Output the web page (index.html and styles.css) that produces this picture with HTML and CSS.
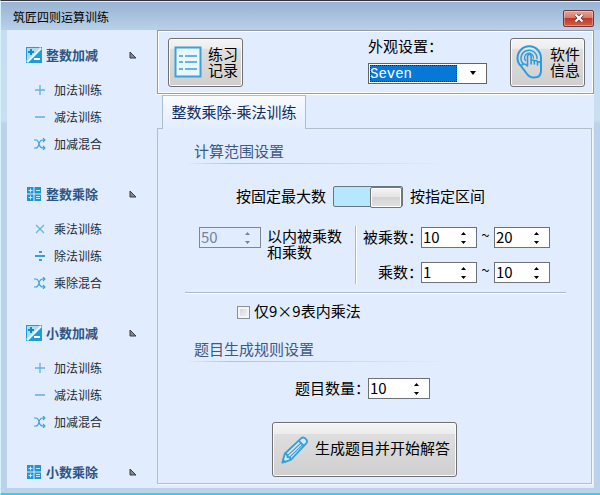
FILE: index.html
```
<!DOCTYPE html>
<html lang="zh-CN">
<head>
<meta charset="utf-8">
<meta name="viewport" content="width=device-width, initial-scale=1">
<title>筑匠四则运算训练</title>
<link rel="stylesheet" href="styles.css">
</head>
<body>
<svg class="symbols" aria-hidden="true">
  <symbol id="plusminus" viewBox="0 0 16 16">
    <path d="M0 0h16v16H0z" fill="#1f9ddb"/><path d="M15 1L1 15" stroke="#e8f6fe" stroke-width="2.500"/><path d="M1 1h13L1 14z" fill="#a9dcf5"/>
    <path d="M2 5h6M5 2v6" stroke="#1787c8" stroke-width="2"/><path d="M8 12h6" stroke="#fff" stroke-width="2"/>
  </symbol>
  <symbol id="calc" viewBox="0 0 16 16">
    <path d="M1 1h6.500v6.500H1zM8.500 1H15v6.500H8.500zM1 8.500h6.500V15H1zM8.500 8.500H15V15H8.500z" fill="#1f93d6"/>
    <path d="M2.500 4.500h4M4.500 2.500v4M10 4.500h4M2.500 11.500h4M4.500 9.500v4M10 10.500h4M10 12.500h4" stroke="#c5e9fc"/>
  </symbol>
  <symbol id="plus" viewBox="0 0 12 12"><path d="M1 6h10M6 1v10" stroke="#65b4e4" stroke-width="1.4"/></symbol>
  <symbol id="minus" viewBox="0 0 12 12"><path d="M1 6h10" stroke="#55ade1" stroke-width="1.4"/></symbol>
  <symbol id="times" viewBox="0 0 12 12"><path d="M2 2l8 8M10 2l-8 8" stroke="#65b4e4" stroke-width="1.2"/></symbol>
  <symbol id="divide" viewBox="0 0 12 12"><path d="M1 6h10" stroke="#369fdb" stroke-width="2"/><path d="M5 1h3v2H5zM5 9h3v2H5z" fill="#369fdb"/></symbol>
  <symbol id="mix" viewBox="0 0 12 12"><path d="M0 2h2q2 0 3 4t4 4h2M0 10h2q2 0 3-4t4-4h2M9 0l2 2-2 2M9 8l2 2-2 2" fill="none" stroke="#3ba2dc" stroke-width="1.1"/></symbol>
  <symbol id="corner" viewBox="0 0 8 8"><path d="M1 1v6h6z" fill="#888" stroke="#353b45"/></symbol>
  <symbol id="updown" viewBox="0 0 5 12"><path d="M0 3L2.500 0 5 3zM0 9h5L2.500 12z" fill="currentColor"/></symbol>
</svg>

<header class="titlebar">
  <h1>筑匠四则运算训练</h1>
  <button class="close" type="button" aria-label="关闭"><svg viewBox="0 0 10 8"><path d="M1.500 .5l7 7M8.500 .5l-7 7" stroke="#5a3034" stroke-width="3.600"/><path d="M1.500 .5l7 7M8.500 .5l-7 7" stroke="#fff" stroke-width="2.200"/></svg></button>
</header>

<div class="window">
  <nav class="sidebar">
    <section class="group">
      <h2><svg class="group-icon"><use href="#plusminus"/></svg>整数加减<svg class="fold"><use href="#corner"/></svg></h2>
      <ul>
        <li><a href="#"><svg><use href="#plus"/></svg>加法训练</a></li>
        <li><a href="#"><svg><use href="#minus"/></svg>减法训练</a></li>
        <li><a href="#"><svg><use href="#mix"/></svg>加减混合</a></li>
      </ul>
    </section>
    <section class="group">
      <h2><svg class="group-icon"><use href="#calc"/></svg>整数乘除<svg class="fold"><use href="#corner"/></svg></h2>
      <ul>
        <li><a href="#"><svg><use href="#times"/></svg>乘法训练</a></li>
        <li><a href="#"><svg><use href="#divide"/></svg>除法训练</a></li>
        <li><a href="#"><svg><use href="#mix"/></svg>乘除混合</a></li>
      </ul>
    </section>
    <section class="group">
      <h2><svg class="group-icon"><use href="#plusminus"/></svg>小数加减<svg class="fold"><use href="#corner"/></svg></h2>
      <ul>
        <li><a href="#"><svg><use href="#plus"/></svg>加法训练</a></li>
        <li><a href="#"><svg><use href="#minus"/></svg>减法训练</a></li>
        <li><a href="#"><svg><use href="#mix"/></svg>加减混合</a></li>
      </ul>
    </section>
    <section class="group">
      <h2><svg class="group-icon"><use href="#calc"/></svg>小数乘除<svg class="fold"><use href="#corner"/></svg></h2>
    </section>
  </nav>

  <main class="content">
    <div class="toolbar">
      <button class="button tool" type="button">
        <svg class="list-icon" viewBox="0 0 28 32"><path d="M1.500 1.500h25v29h-25z" fill="#eaf5fc" stroke="#3ba3dc" stroke-width="2"/><path d="M5 10h4M11 10h12M5 16h4M11 16h12M5 23h4M11 23h12" stroke="#3aa0da" stroke-width="1.500"/></svg>
        <span>练习<br>记录</span>
      </button>
      <div class="theme">
        <label for="theme">外观设置：</label>
        <div class="combo">
          <select id="theme"><option>Seven</option></select>
          <svg viewBox="0 0 6 4"><path d="M0 0h6L3 4z"/></svg>
        </div>
      </div>
      <button class="button tool" type="button">
        <svg class="touch-icon" viewBox="0 0 28 34"><g fill="none" stroke="#2c9bdc" stroke-linecap="round" stroke-linejoin="round"><path d="M25 19V13A11.700 11.700 0 0 0 1.500 13Q1.500 18 5 21L11 29Q13.500 32.500 18 32.500 25 32.500 25 26V18" stroke-width="2"/><path d="M7 18.500A8 8 0 1 1 21 13.500" stroke-width="1.500"/><path d="M9.500 15.500A4.500 4.500 0 1 1 17.500 13" stroke-width="1.300"/><path d="M11.500 21V11.500q0-2 1.800-2t1.800 2V19v-3q1.500-2 3.200 0v3-2.500q1.500-2 3.200 0V20v-2.500q1.500-1.500 3.500 .5M11.500 21q-3.500-3.500-5.500-1" stroke-width="1.600"/></g></svg>
        <span>软件<br>信息</span>
      </button>
    </div>

    <div class="tabs" role="tablist"><button class="tab" type="button" role="tab" aria-selected="true">整数乘除-乘法训练</button></div>

    <form class="panel">
      <div class="form">
        <h3>计算范围设置</h3>
        <div class="mode">
          <label for="mode">按固定最大数</label>
          <input class="toggle" type="checkbox" role="switch" id="mode" checked>
          <label for="mode">按指定区间</label>
        </div>
        <div class="ranges">
          <div class="limit">
            <div class="spin wide disabled"><input id="limit" type="text" inputmode="numeric" value="50" disabled><svg><use href="#updown"/></svg></div>
            <label for="limit">以内被乘数<br>和乘数</label>
          </div>
          <div class="intervals">
            <label for="a1">被乘数：</label>
            <div class="spin"><input id="a1" type="text" inputmode="numeric" value="10"><svg><use href="#updown"/></svg></div>
            <span class="tilde">~</span>
            <div class="spin"><input aria-label="被乘数" type="text" inputmode="numeric" value="20"><svg><use href="#updown"/></svg></div>
            <label for="b1">乘数：</label>
            <div class="spin"><input id="b1" type="text" inputmode="numeric" value="1"><svg><use href="#updown"/></svg></div>
            <span class="tilde">~</span>
            <div class="spin"><input aria-label="乘数" type="text" inputmode="numeric" value="10"><svg><use href="#updown"/></svg></div>
          </div>
        </div>
        <div class="table-only"><input type="checkbox" id="table"><label for="table">仅9×9表内乘法</label></div>
        <h3>题目生成规则设置</h3>
        <div class="count">
          <label for="count">题目数量：</label>
          <div class="spin wide"><input id="count" type="text" inputmode="numeric" value="10"><svg><use href="#updown"/></svg></div>
        </div>
        <button class="button start" type="button">
          <svg class="pencil" viewBox="0 0 30 30"><g fill="none" stroke="#3a9ed8" stroke-width="2" stroke-linejoin="round"><path d="M1.500 28.500L4 19 21.500 2.500q2.500-2 5 .5t.5 5L10.500 25.500z" fill="#d4ebf8"/><path d="M4 19q3 0 3 3.500 3.500 0 3.500 3M19 5l5.500 5.500"/><path d="M7 21L21.500 7.500M9 23L23 9.500" stroke-width="1.200"/></g><path d="M1 29l1-5 4 4z" fill="#3a9ed8"/></svg>
          <span>生成题目并开始解答</span>
        </button>
      </div>
    </form>
  </main>
</div>
</body>
</html>
```

FILE: styles.css
```
* { box-sizing: border-box; }

body {
  margin: 0;
  min-height: 100vh;
  display: flex;
  flex-direction: column;
  border-top: 1px solid #303038;
  border-left: 1px solid #d5f2fb;
  border-bottom: 2px solid #2fd0f0;
  background: linear-gradient(#c5dbf1 0, #c9e0f2 120px, #bad2ea 124px);
  font: 15px/16px "Noto Sans CJK SC", sans-serif;
  color: #000;
}

h1, h2, h3, ul { margin: 0; padding: 0; font-weight: normal; }
ul { list-style: none; }
button, input, select { font: inherit; color: inherit; margin: 0; }
.symbols { position: absolute; width: 0; height: 0; }

.titlebar {
  height: 29px;
  flex: none;
  display: flex;
  align-items: center;
  justify-content: space-between;
  padding: 4px 6px 0 12px;
  border-top: 1px solid #e4f1fc;
  background: linear-gradient(#98b4d2, #b9d0e8);
}
.titlebar h1 { font-size: 12px; padding-bottom: 2px; }
.close {
  width: 31px;
  height: 17px;
  padding: 0;
  display: grid;
  place-items: center;
  border: 1px solid #71363c;
  border-radius: 2px;
  background: linear-gradient(#e6a396, #d67b6c 45%, #bd3a28 50%, #d0604c);
  box-shadow: inset 0 0 0 1px #ffffff50;
}
.close svg { width: 10px; height: 8px; }

.window {
  flex: 1;
  display: grid;
  grid-template-columns: 150px 1fr;
  margin: 0 6px 5px;
  background: #e1edff;
}

.sidebar { padding-top: 10px; }
.group + .group { margin-top: 22px; }
.group h2 {
  height: 30px;
  display: flex;
  align-items: center;
  padding: 0 20px 0 19px;
  font-size: 13px;
  font-weight: bold;
  color: #2f5585;
}
.group-icon { width: 16px; height: 16px; margin-right: 4px; }
.fold { width: 8px; height: 8px; margin-left: auto; }
.group ul { margin-top: 6px; }
.group a {
  height: 27px;
  display: flex;
  align-items: center;
  gap: 8px;
  padding-left: 27px;
  font-size: 12px;
  color: #222a36;
  text-decoration: none;
}
.group a svg { width: 12px; height: 12px; }

.content { display: flex; flex-direction: column; }

.toolbar {
  display: flex;
  align-items: flex-start;
  justify-content: space-between;
  padding: 7px 8px 6px 10px;
  border: 1px solid #969ca5;
  box-shadow: inset 0 0 0 1px #fff, 0 1px #fff;
}
.button {
  display: flex;
  align-items: center;
  border: 1px solid #707070;
  border-radius: 3px;
  background: linear-gradient(#f4f4f4, #ededed 20%, #dedede 21%, #cfcfcf);
  box-shadow: inset 0 0 0 1px #fbfbfb;
}
.tool { width: 75px; height: 49px; justify-content: space-between; padding: 0 4px 2px 5px; }
.list-icon { width: 28px; height: 32px; }
.touch-icon { width: 28px; height: 34px; }
.theme { margin-left: auto; margin-right: 23px; }
.theme label { display: block; margin-bottom: 9px; }
.combo { position: relative; width: 119px; height: 21px; }
.combo select {
  appearance: none;
  width: 100%;
  height: 100%;
  padding: 2px 0 0 1px;
  border: 1px solid #646464;
  border-radius: 0;
  background: linear-gradient(#0878d7, #0878d7) 1px 1px / 87px 17px no-repeat #fff;
  color: #fff;
  font: 14px/17px "Liberation Mono", "Noto Sans CJK SC", monospace;
}
.combo::after {
  content: "";
  position: absolute;
  inset: 2px 30px 2px 2px;
  border: 1px dotted #222;
  pointer-events: none;
}
.combo svg { position: absolute; right: 11px; top: 8px; width: 6px; height: 4px; pointer-events: none; }

.tabs { position: relative; margin: 1px 0 -1px 5px; }
.tab {
  height: 34px;
  width: 144px;
  padding: 0 0 2px;
  border: 1px solid #aebdcc;
  border-bottom: 0;
  background: linear-gradient(#f8fbff, #e1edff);
  color: #122a60;
  white-space: nowrap;
  display: block;
}

.panel {
  flex: 1;
  margin: 0 2px 4px 0;
  padding: 14px 25px 6px 27px;
  border: 1px solid #b5bdca;
  box-shadow: 1px 1px #f3f8ff;
}
h3 {
  height: 21px;
  padding-left: 9px;
  font-size: 15px;
  line-height: 16px;
  color: #3b5a8a;
  background: linear-gradient(90deg, transparent, #b4c3d6 12%, transparent 70%) 0 100% / 100% 1px no-repeat;
}
.mode { display: flex; align-items: center; gap: 7px; margin: 22px 0 0 51px; }
.mode label, .table-only label, .count label, .intervals label { padding-bottom: 2px; }
.toggle {
  appearance: none;
  width: 70px;
  height: 21px;
  padding-left: 36px;
  border: 1px solid #67777f;
  border-radius: 2px;
  background: #b5e8ff;
}
.toggle::before {
  content: "";
  display: block;
  height: 19px;
  border: 1px solid #777;
  border-radius: 2px;
  background: linear-gradient(#f5f5f5, #e4e4e4 45%, #d3d3d3 50%, #e3e3e3);
  box-shadow: inset 0 0 0 1px #fff;
}
.ranges { display: flex; margin-top: 19px; padding: 0 16px 8px 14px; border-bottom: 1px solid #b0b9c3; box-shadow: 0 1px #fff; }
.limit { flex: none; display: flex; align-items: flex-start; gap: 6px; width: 157px; padding-top: 1px; border-right: 1px solid #b0b9c3; box-shadow: 1px 0 #fff; }
.limit label { padding-top: 1px; }
.spin { display: flex; align-items: center; width: 56px; height: 21px; border: 1px solid #6d7178; background: #fff; padding-right: 10px; }
.spin input { flex: 1; min-width: 0; height: 19px; padding: 0 1px 2px; border: 0; background: none; outline: 0; }
.spin svg { width: 5px; height: 12px; }
.wide { width: 62px; }
.disabled { background: none; color: #798393; border-color: #7c8694; }
.intervals {
  flex: 1;
  display: grid;
  grid-template-columns: 1fr 56px 17px 56px;
  row-gap: 14px;
  align-items: center;
  padding: 1px 0;
}
.intervals label { text-align: right; }
.intervals label, .count label { margin-right: -2px; }
.tilde { text-align: center; align-self: start; }
.table-only { display: flex; align-items: center; gap: 4px; margin: 10px 0 0 52px; }
.table-only input {
  appearance: none;
  width: 13px;
  height: 13px;
  border: 1px solid #8b8f96;
  background: linear-gradient(135deg, #ccd0d4, #f6f6f6);
  box-shadow: inset 0 0 0 2px #f4f4f4;
}
.table-only + h3 { margin-top: 20px; }
.count { display: flex; align-items: center; margin: 16px 0 0 110px; }
.start { width: 185px; height: 55px; gap: 6px; margin: 23px 0 0 87px; padding: 0 6px 0 8px; white-space: nowrap; }
.start span { padding-bottom: 4px; }
.pencil { width: 28px; height: 28px; flex: none; }
```
